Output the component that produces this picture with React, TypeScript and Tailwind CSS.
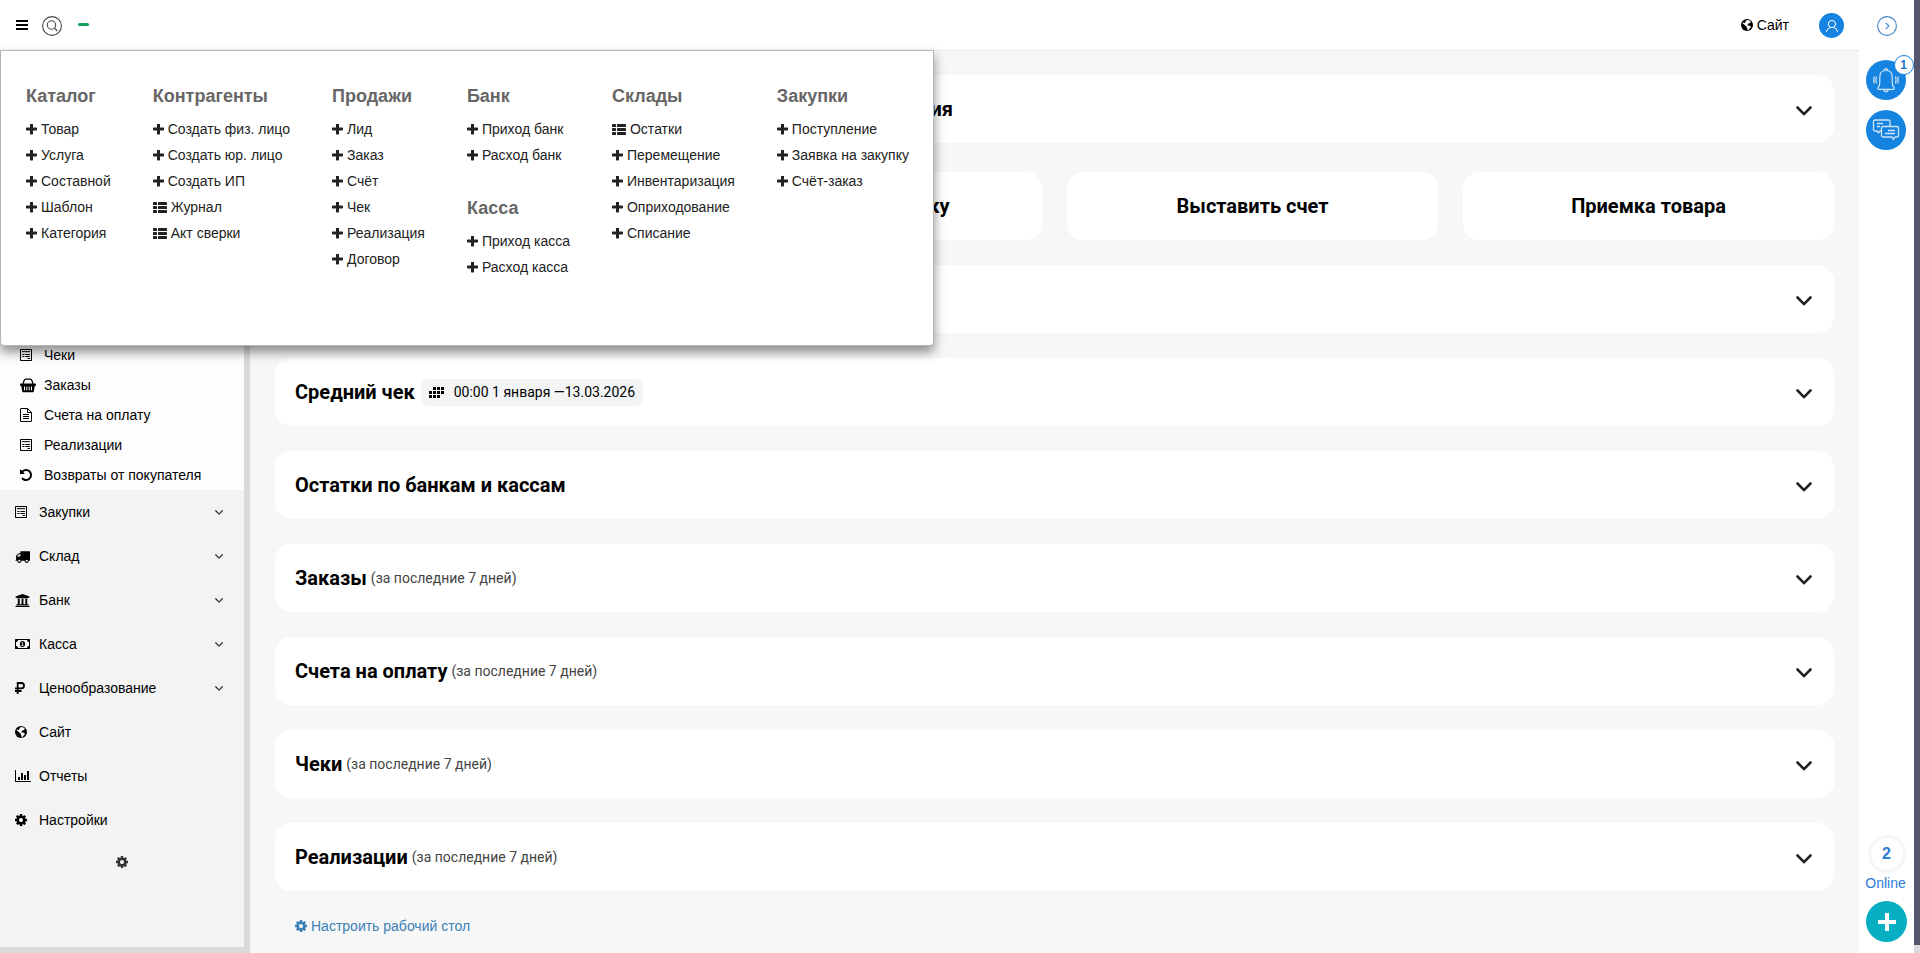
import type { ReactNode } from "react";
import { FaUniversity } from "react-icons/fa";

type IconProps = { className?: string };

const PLUS =
  "M1600 736v192q0 40-28 68t-68 28h-416v416q0 40-28 68t-68 28h-192q-40 0-68-28t-28-68v-416h-416q-40 0-68-28t-28-68v-192q0-40 28-68t68-28h416v-416q0-40 28-68t68-28h192q40 0 68 28t28 68v416h416q40 0 68 28t28 68z";
const COG =
  "M1152 896q0-106-75-181t-181-75-181 75-75 181 75 181 181 75 181-75 75-181zm512-109v222q0 12-8 23t-20 13l-185 28q-19 54-39 91 35 50 107 138 10 12 10 25t-9 23q-27 37-99 108t-94 71q-12 0-26-9l-138-108q-44 23-91 38-16 136-29 186-7 28-36 28h-222q-14 0-24.5-8.5t-11.5-21.5l-28-184q-49-16-90-37l-141 107q-10 9-25 9-14 0-25-11-126-114-165-168-7-10-7-23 0-12 8-23 15-21 51-66.5t54-70.5q-27-50-41-99l-183-27q-13-2-21-12.5t-8-23.5v-222q0-12 8-23t19-13l186-28q14-46 39-92-40-57-107-138-10-12-10-24 0-10 9-23 26-36 98.5-107.5t94.5-71.5q13 0 26 10l138 107q44-23 91-38 16-136 29-186 7-28 36-28h222q14 0 24.5 8.5t11.5 21.5l28 184q49 16 90 37l142-107q9-9 24-9 13 0 25 10 129 119 165 170 7 8 7 22 0 12-8 23-15 21-51 66.5t-54 70.5q26 50 41 98l183 28q13 2 21 12.5t8 23.5z";
const UNDO =
  "M1664 896q0 156-61 298t-164 245-245 164-298 61q-172 0-327-72.5t-264-204.5q-7-10-6.5-22.5t8.5-20.5l137-138q10-9 25-9 16 2 23 12 73 95 179 147t225 52q104 0 198.5-40.5t163.5-109.5 109.5-163.5 40.5-198.5-40.5-198.5-109.5-163.5-163.5-109.5-198.5-40.5q-98 0-188 35.5t-160 101.5l137 138q31 30 14 69-17 40-59 40h-448q-26 0-45-19t-19-45v-448q0-42 40-59 39-17 69 14l130 129q107-101 244.5-156.5t284.5-55.5q156 0 298 61t245 164 164 245 61 298z";
const TRUCK =
  "M640 1408q0-52-38-90t-90-38-90 38-38 90 38 90 90 38 90-38 38-90zm-384-512h384v-256h-158q-13 0-22 9l-195 195q-9 9-9 22v30zm1280 512q0-52-38-90t-90-38-90 38-38 90 38 90 90 38 90-38 38-90zm256-1088v1024q0 15-4 26.5t-13.5 18.5-16.5 11.5-23.5 6-22.5 2-25.5 0-22.5-.5q0 106-75 181t-181 75-181-75-75-181h-384q0 106-75 181t-181 75-181-75-75-181h-64q-3 0-22.5.5t-25.5 0-22.5-2-23.5-6-16.5-11.5-13.5-18.5-4-26.5q0-26 19-45t45-19v-320q0-8-.5-35t0-38 2.5-34.5 6.5-37 14-30.5 22.5-30l198-198q19-19 50.5-32t58.5-13h160v-192q0-26 19-45t45-19h1024q26 0 45 19t19 45z";

function Glyph({ d, className = "size-3.5", box = "0 0 1792 1792" }: { d: string; className?: string; box?: string }) {
  return (
    <svg viewBox={box} className={`shrink-0 ${className}`} fill="currentColor" aria-hidden="true">
      <path d={d} />
    </svg>
  );
}

function ListIcon() {
  return (
    <svg viewBox="0 0 14 11" className="h-[11px] w-3.5 shrink-0" fill="currentColor" aria-hidden="true">
      <rect width="4" height="3" rx=".6" />
      <rect x="5" width="9" height="3" rx=".6" />
      <rect y="4" width="4" height="3" rx=".6" />
      <rect x="5" y="4" width="9" height="3" rx=".6" />
      <rect y="8" width="4" height="3" rx=".6" />
      <rect x="5" y="8" width="9" height="3" rx=".6" />
    </svg>
  );
}

function ReceiptIcon() {
  return (
    <svg viewBox="0 0 12 12" className="size-3 shrink-0" fill="none" stroke="currentColor" aria-hidden="true">
      <rect x=".5" y=".5" width="11" height="11" rx=".6" strokeWidth="1.1" />
      <path d="M2 2.2l1 .9 1-.9 1 .9 1-.9 1 .9 1-.9 1 .9 1-.9M2.4 5.5h2M2.4 7.5h2M5.3 5.5h4.6M5.3 7.5h4.6M7.5 9.5h2.4" />
    </svg>
  );
}

function BasketIcon() {
  return (
    <svg viewBox="0 0 16 15" className="h-[15px] w-4 shrink-0" aria-hidden="true">
      <path d="M3 6L4.2 2.3Q4.5 1.2 5.6 1.2h4.8q1.1 0 1.4 1.1L13 6" fill="none" stroke="currentColor" strokeWidth="1.2" />
      <path d="M.8 5.5h14.4q.6 0 .6.6v1.3q0 .6-.6.6h-.4l-1 5.5q-.1.8-.9.8H3.1q-.8 0-.9-.8L1.2 8H.8q-.6 0-.6-.6V6.1q0-.6.6-.6z" fill="currentColor" />
      <path d="M4.5 8.5v3.8M6.8 8.5v3.8M9.2 8.5v3.8M11.5 8.5v3.8" stroke="#fdfdfd" />
    </svg>
  );
}

function FileIcon() {
  return (
    <svg viewBox="0 0 12 14" className="h-3.5 w-3 shrink-0" fill="none" stroke="currentColor" aria-hidden="true">
      <path d="M.5 1V13q0 .5.5.5h10q.5 0 .5-.5V4.4L7.6.5H1Q.5.5.5 1zM7.5.5V4.5h4M3 6.5h6M3 8.5h6M3 10.5h6" />
    </svg>
  );
}

function MoneyIcon() {
  return (
    <svg viewBox="0 0 15 10" className="h-2.5 w-[15px] shrink-0" aria-hidden="true">
      <path
        fill="currentColor"
        fillRule="evenodd"
        d="M.5 0h14q.5 0 .5.5v9q0 .5-.5.5H.5Q0 10 0 9.5v-9Q0 0 .5 0zM3 1Q3 3 1 3v4q2 0 2 2h9q0-2 2-2V3q-2 0-2-2z"
      />
      <ellipse cx="7.5" cy="5" rx="2.6" ry="3.1" fill="currentColor" />
      <path d="M6.6 3.9l1-.6v3M6.4 6.6h2.3" stroke="#f3f3f3" strokeWidth=".8" fill="none" />
    </svg>
  );
}

function RubleIcon() {
  return (
    <svg viewBox="0 0 10 12" className="h-3 w-2.5 shrink-0" fill="none" stroke="currentColor" aria-hidden="true">
      <path d="M2.7 12V1h3.6Q9 1 9 3.7T6.3 6.4H0M0 9h6.5" strokeWidth="1.8" />
    </svg>
  );
}

function GlobeIcon() {
  return (
    <svg viewBox="0 0 12 12" className="size-3 shrink-0" aria-hidden="true">
      <circle cx="6" cy="6" r="6" fill="currentColor" />
      <path
        d="M5.600.9l1.200.3 1 .1 1.700 1 .5 1-1 .2-.5.800-1.100.3-.9 1.100.1.800 1.500-.1 1.700 1-.3 1.300-1.300 1.300-.6 1-1 .3-.2-1.800-.9-1.200.1-1-1.500-.9L3 5.200 1.700 4.500l.2-1.100.9.1.5.8.9-.6-.2-.7.9-.8z"
        className="fill-white"
      />
    </svg>
  );
}

function ChartIcon() {
  return (
    <svg viewBox="0 0 16 12" className="h-3 w-4 shrink-0" fill="currentColor" aria-hidden="true">
      <path d="M0 0h1v11h15v1H0zM3 7h2v3H3zM6 3h2v7H6zM9 5h2v5H9zM12 1h2v9h-2z" />
    </svg>
  );
}

function ChevronDown({ className }: IconProps) {
  return (
    <svg viewBox="0 0 16 10" className={className} fill="none" stroke="currentColor" strokeLinecap="round" strokeLinejoin="round" aria-hidden="true">
      <path d="M1.5 1.5L8 8.2l6.5-6.7" strokeWidth="2.6" />
    </svg>
  );
}

type MenuItem = { label: string; list?: boolean };
type MenuGroup = { title: string; items: MenuItem[] };

const megaMenu: MenuGroup[][] = [
  [
    {
      title: "Каталог",
      items: [{ label: "Товар" }, { label: "Услуга" }, { label: "Составной" }, { label: "Шаблон" }, { label: "Категория" }],
    },
  ],
  [
    {
      title: "Контрагенты",
      items: [
        { label: "Создать физ. лицо" },
        { label: "Создать юр. лицо" },
        { label: "Создать ИП" },
        { label: "Журнал", list: true },
        { label: "Акт сверки", list: true },
      ],
    },
  ],
  [
    {
      title: "Продажи",
      items: [
        { label: "Лид" },
        { label: "Заказ" },
        { label: "Счёт" },
        { label: "Чек" },
        { label: "Реализация" },
        { label: "Договор" },
      ],
    },
  ],
  [
    { title: "Банк", items: [{ label: "Приход банк" }, { label: "Расход банк" }] },
    { title: "Касса", items: [{ label: "Приход касса" }, { label: "Расход касса" }] },
  ],
  [
    {
      title: "Склады",
      items: [
        { label: "Остатки", list: true },
        { label: "Перемещение" },
        { label: "Инвентаризация" },
        { label: "Оприходование" },
        { label: "Списание" },
      ],
    },
  ],
  [
    {
      title: "Закупки",
      items: [{ label: "Поступление" }, { label: "Заявка на закупку" }, { label: "Счёт-заказ" }],
    },
  ],
];

const salesLinks: { label: string; icon: ReactNode }[] = [
  { label: "Чеки", icon: <ReceiptIcon /> },
  { label: "Заказы", icon: <BasketIcon /> },
  { label: "Счета на оплату", icon: <FileIcon /> },
  { label: "Реализации", icon: <ReceiptIcon /> },
  { label: "Возвраты от покупателя", icon: <Glyph d={UNDO} box="128 128 1536 1536" className="size-3" /> },
];

const sections: { label: string; icon: ReactNode; expandable?: boolean }[] = [
  { label: "Закупки", icon: <ReceiptIcon />, expandable: true },
  { label: "Склад", icon: <Glyph d={TRUCK} className="size-[15px]" />, expandable: true },
  { label: "Банк", icon: <FaUniversity className="size-[15px]" />, expandable: true },
  { label: "Касса", icon: <MoneyIcon />, expandable: true },
  { label: "Ценообразование", icon: <RubleIcon />, expandable: true },
  { label: "Сайт", icon: <GlobeIcon /> },
  { label: "Отчеты", icon: <ChartIcon /> },
  { label: "Настройки", icon: <Glyph d={COG} box="128 128 1536 1536" className="size-3" /> },
];

const actions = ["Оформить отгрузку", "Выставить счет", "Приемка товара"];

const widgets: { title: string; note?: string; period?: string }[] = [
  { title: "Продажи" },
  { title: "Средний чек", period: "00:00 1 января —13.03.2026" },
  { title: "Остатки по банкам и кассам" },
  { title: "Заказы", note: "(за последние 7 дней)" },
  { title: "Счета на оплату", note: "(за последние 7 дней)" },
  { title: "Чеки", note: "(за последние 7 дней)" },
  { title: "Реализации", note: "(за последние 7 дней)" },
];

function MegaMenu() {
  return (
    <nav
      aria-label="Быстрое создание"
      className="absolute left-0 top-[50px] z-20 flex h-[296px] gap-[42px] rounded-b border border-[#b5b5b5] bg-white pl-[25px] pr-6 pt-[33px] shadow-[0_6px_12px_rgba(0,0,0,0.45)]"
    >
      {megaMenu.map((groups) => (
        <div key={groups[0].title} className="flex flex-col gap-7">
          {groups.map((group) => (
            <div key={group.title}>
              <h3 className="mb-2 text-lg/6 font-bold text-[#666]">{group.title}</h3>
              <ul>
                {group.items.map((item) => (
                  <li key={item.label}>
                    <a href="#" className="flex h-[26px] items-center gap-1 whitespace-nowrap text-sm text-[#222]">
                      {item.list ? <ListIcon /> : <Glyph d={PLUS} box="192 192 1408 1408" className="size-[11px]" />}
                      {item.label}
                    </a>
                  </li>
                ))}
              </ul>
            </div>
          ))}
        </div>
      ))}
    </nav>
  );
}

function Header() {
  return (
    <header className="flex h-[51px] items-center border-b border-[#ebebeb] bg-white pl-4 pr-[15px]">
      <button aria-label="Меню" className="flex w-3 flex-col gap-[2px]">
        <span className="h-[2px] bg-black" />
        <span className="h-[2px] bg-black" />
        <span className="h-[2px] bg-black" />
      </button>
      <button aria-label="Поиск" className="ml-3.5 mt-px text-[#444]">
        <svg viewBox="0 0 20 20" className="size-5" fill="none" stroke="currentColor" aria-hidden="true">
          <circle cx="10" cy="10" r="9.4" strokeWidth="1.1" />
          <circle cx="9.5" cy="9" r="4.2" strokeWidth="1.1" />
          <path d="M12.5 12.2l2.8 2.8" strokeWidth="1.2" />
        </svg>
      </button>
      <span className="mb-px ml-4 h-[3px] w-[11px] rounded-xs bg-[#12a15f]" />
      <a href="#" className="ml-auto flex items-center gap-1 text-sm text-black">
        <GlobeIcon />
        Сайт
      </a>
      <button aria-label="Профиль" className="ml-[30px] mt-px flex size-[25px] items-center justify-center rounded-full bg-[#1583e0] text-white">
        <svg viewBox="0 0 14 14" className="size-3.5" fill="none" stroke="currentColor" strokeLinecap="round" aria-hidden="true">
          <circle cx="7" cy="5" r="3.6" />
          <path d="M1.4 12.5q.6-3.5 4-4.1M12.6 12.5q-.6-3.5-4-4.1" />
        </svg>
      </button>
    </header>
  );
}

function Sidebar() {
  return (
    <aside className="flex w-[250px] shrink-0 flex-col border-b-[6px] border-r-[6px] border-[#dadada] bg-[#f3f3f3] text-sm text-black">
      <ul className="bg-[#fdfdfd] pt-[289px]">
        {salesLinks.map((link) => (
          <li key={link.label}>
            <a href="#" className="flex h-[30px] items-center pl-5">
              <span className="flex w-6 items-center">{link.icon}</span>
              {link.label}
            </a>
          </li>
        ))}
      </ul>
      <ul>
        {sections.map((section) => (
          <li key={section.label}>
            <a href="#" className="flex h-11 items-center pl-[15px] pr-[21px]">
              <span className="flex w-6 items-center">{section.icon}</span>
              {section.label}
              {section.expandable && <ChevronDown className="ml-auto h-[5px] w-2 overflow-visible text-[#333]" />}
            </a>
          </li>
        ))}
      </ul>
      <button aria-label="Настроить меню" className="mt-3.5 self-center text-[#333]">
        <Glyph d={COG} box="128 128 1536 1536" className="size-3" />
      </button>
    </aside>
  );
}

function Card({ children }: { children: ReactNode }) {
  return (
    <section className="flex h-[68px] items-center rounded-2xl bg-white pl-5 pr-[22px]">
      {children}
      <button aria-label="Развернуть" className="ml-auto pt-1 text-[#222]">
        <ChevronDown className="h-2.5 w-4" />
      </button>
    </section>
  );
}

function Dashboard() {
  return (
    <main className="flex min-w-0 grow flex-col gap-[25px] bg-[#f7f7f7] px-[25px] pt-6 font-[Roboto,sans-serif]">
      <Card>
        <h2 className="w-[658px] text-right text-xl font-bold text-black">Акция</h2>
      </Card>
      <div className="mt-1 grid grid-cols-4 gap-[25px]">
        <div className="h-[68px] rounded-2xl bg-white" />
        {actions.map((action) => (
          <button key={action} className="h-[68px] rounded-2xl bg-white text-xl font-bold text-black">
            {action}
          </button>
        ))}
      </div>
      {widgets.map((widget) => (
        <Card key={widget.title}>
          <h2 className="text-xl font-bold text-black">{widget.title}</h2>
          {widget.note && <span className="ml-1 text-sm text-[#444]">{widget.note}</span>}
          {widget.period && (
            <button className="ml-1.5 flex h-[27px] items-center gap-2.5 rounded-lg bg-[#f3f4f6] px-2 text-sm text-black">
              <svg viewBox="0 0 15 11" className="h-[11px] w-[15px]" fill="currentColor" aria-hidden="true">
                <path d="M4 0h3v3H4zM8 0h3v3H8zM12 0h3v3h-3zM0 4h3v3H0zM4 4h3v3H4zM8 4h3v3H8zM12 4h3v3h-3zM0 8h3v3H0zM4 8h3v3H4zM8 8h3v3H8z" />
              </svg>
              {widget.period}
            </button>
          )}
        </Card>
      ))}
      <a href="#" className="ml-5 flex items-center gap-1 self-start font-['Liberation_Sans',Arial,sans-serif] text-sm text-[#3a80b5]">
        <Glyph d={COG} box="128 128 1536 1536" className="size-3" />
        Настроить рабочий стол
      </a>
    </main>
  );
}

function RightRail() {
  return (
    <aside className="flex w-[55px] shrink-0 flex-col items-center bg-white pb-[11px] pt-4 text-[#1583e0]">
      <button aria-label="Свернуть панель" className="text-[#3f86c8]">
        <svg viewBox="0 0 20 20" className="size-5" fill="none" stroke="currentColor" strokeWidth="1.1" aria-hidden="true">
          <circle cx="10" cy="10" r="9.4" />
          <path d="M8.7 6.8l3.2 3.2-3.2 3.2" />
        </svg>
      </button>
      <div className="mt-6 flex flex-col gap-2.5 pr-0.5">
        <button aria-label="Уведомления" className="relative flex size-10 items-center justify-center rounded-full bg-[#1583e0] text-white">
          <svg viewBox="0 0 28 26" className="h-[26px] w-7 opacity-80" fill="none" stroke="currentColor" strokeWidth="1.2" aria-hidden="true">
            <path d="M6 20.5q1.8-1.8 1.8-5V10q0-6.5 6.2-6.5T20.2 10v5.5q0 3.2 1.8 5 .8 1.8-1 1.8H7q-1.8 0-1-1.8z" />
            <path d="M12.3 3.6q0-2 1.7-2t1.7 2M11.5 22.4q.5 2.2 2.5 2.2t2.5-2.2" />
            <path d="M4.500 9.500q-1.200 3.500 0 7M2.300 9.500q-1.200 3.500 0 7M23.500 9.500q1.200 3.500 0 7M25.700 9.500q1.200 3.500 0 7" />
          </svg>
          <span className="absolute -right-2 -top-[5px] flex size-5 items-center justify-center rounded-full border border-[#1583e0] bg-white text-xs font-bold text-[#1b74c9]">
            1
          </span>
        </button>
        <button aria-label="Сообщения" className="flex size-10 items-center justify-center rounded-full bg-[#1583e0] text-white">
          <svg viewBox="0 0 28 24" className="h-6 w-7 opacity-80" fill="none" stroke="currentColor" strokeWidth="1.3" aria-hidden="true">
            <path d="M9.5 13H8l-1.5 2L5 13H3q-1.5 0-1.5-1.5v-8Q1.5 2 3 2h13.5Q18 2 18 3.5V8.5" />
            <path d="M11 8.5h14q1.5 0 1.5 1.5v7.5q0 1.5-1.5 1.5h-2l-1.5 2.5L20 19h-9q-1.5 0-1.5-1.5V10q0-1.5 1.5-1.5zM5 5.5h6M5 8.5h3M13 15.5h10M16 12.5h7" />
          </svg>
        </button>
      </div>
      <div className="mt-auto flex size-[38px] items-center justify-center rounded-full border-[3px] border-[#f6f6f6] text-base font-bold text-[#2b7cd3]">
        2
      </div>
      <span className="pr-0.5 text-sm text-[#2b7cd3]">Online</span>
      <button aria-label="Добавить" className="mt-2 flex size-[41px] shrink-0 items-center justify-center rounded-full bg-[#05afc1] text-white">
        <svg viewBox="0 0 18 18" className="size-[18px]" fill="currentColor" aria-hidden="true">
          <path d="M7 0h4v7h7v4h-7v7H7v-7H0V7h7z" />
        </svg>
      </button>
    </aside>
  );
}

export default function App() {
  return (
    <div className="relative flex min-h-screen bg-white font-['Liberation_Sans',Arial,sans-serif]">
      <div className="flex min-w-0 grow flex-col">
        <Header />
        <div className="flex grow">
          <Sidebar />
          <Dashboard />
        </div>
      </div>
      <RightRail />
      <div className="flex w-1.5 shrink-0 flex-col bg-[#53566d]">
        <div className="mt-auto h-2 bg-[#dcdce0]" />
      </div>
      <MegaMenu />
    </div>
  );
}
